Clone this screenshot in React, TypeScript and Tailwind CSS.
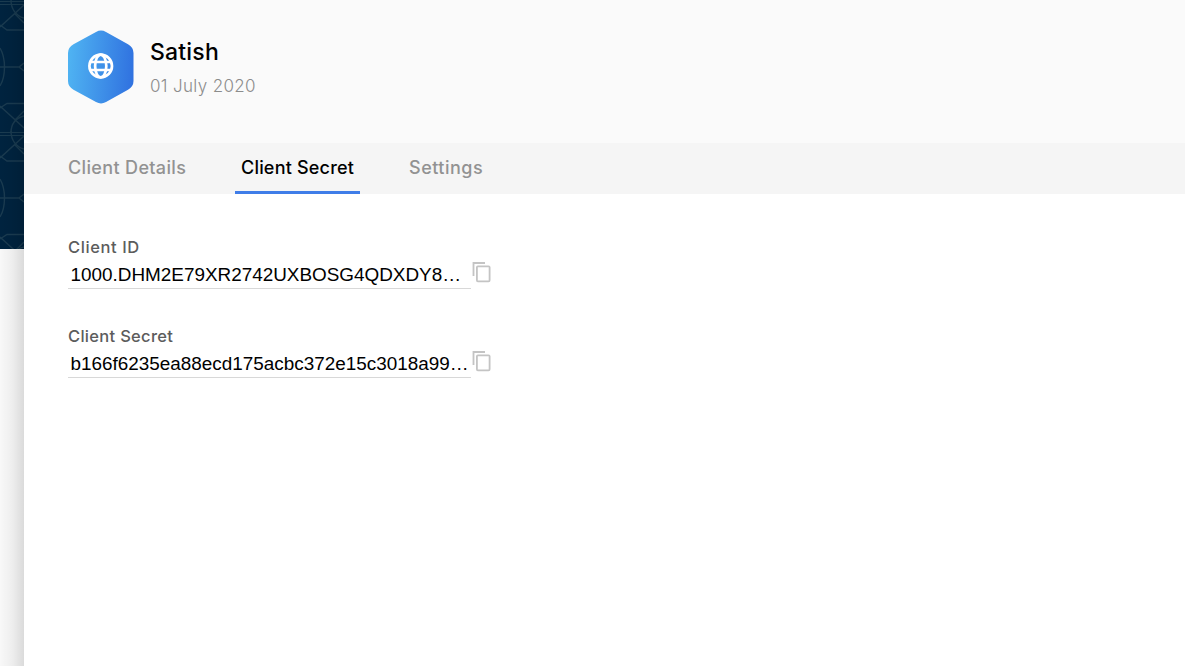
import React from "react";

function Backdrop() {
  return (
    <div className="relative flex w-6 shrink-0 flex-col overflow-hidden bg-[#f8f8f8]">
      <svg width="24" height="249" viewBox="0 0 24 249" className="shrink-0 bg-[#00233f]" fill="none" stroke="#1a3b50" strokeWidth="1.4">
        <g id="tile">
          <path d="M0 1.5H24M0 4.5H24" strokeWidth="1" />
          <path d="M0 27L24 5M0 25L7 30H24M15 14L24 23" />
          <path d="M11 0C11 9 16 16 24 18" />
          <path d="M0 48C6 58 6 76 0 86M0 67H19M24 63L19 67L24 71" />
          <path d="M0 108L7 103.500H24M0 106L24 128M15 120L24 111" />
          <path d="M11 133C11 124 16 118 24 116" />
        </g>
        <use href="#tile" y="131" />
      </svg>
      <div className="absolute inset-0 bg-linear-to-r from-transparent via-black/[0.04] to-black/[0.12]" />
    </div>
  );
}

function HexLogo() {
  return (
    <svg width="66" height="74" viewBox="0 0 66 74" className="shrink-0">
      <defs>
        <linearGradient id="hex" x1="0" y1="0.46" x2="1" y2="0.54">
          <stop offset="0" stopColor="#4fb3f2" />
          <stop offset="1" stopColor="#3072e0" />
        </linearGradient>
      </defs>
      <path d="M28 2Q33 -.8 38 2L60 14.200Q65.500 17.300 65.500 23V51Q65.500 56.500 60 59.700L38 72Q33 74.800 28 72L5.500 59.700Q0 56.500 0 51V23Q0 17.300 5.500 14.200Z" fill="url(#hex)" />
      <g fill="none" stroke="#fff" strokeWidth="2.7">
        <circle cx="32.700" cy="36" r="11.300" />
        <ellipse cx="32.700" cy="36" rx="5.600" ry="11.300" />
        <path d="M22 32H43.500M22 40H43.500" />
      </g>
    </svg>
  );
}

function CopyIcon() {
  return (
    <svg width="20" height="22" viewBox="0 0 20 22" fill="none" stroke="#c4c4c4" strokeWidth="1.8" className="shrink-0">
      <path d="M2.5 15V2H14" />
      <rect x="5.9" y="5.3" width="12.700" height="15" rx="1" />
    </svg>
  );
}

function Field({ label, value, labelClass }: { label: string; value: string; labelClass: string }) {
  return (
    <div className="h-[89px]">
      <div className={`h-[22px] text-[16.5px] leading-[22px] font-medium text-[#5c5c5c] ${labelClass}`}>{label}</div>
      <div className="flex">
        <div className="mt-1 h-[27px] w-[403px] border-b border-[#d8d8d8] pl-[2.5px] font-['Liberation_Sans',sans-serif] text-[18.9px] leading-[26px] whitespace-nowrap text-black">{value}</div>
        <button className="mt-[3px] h-[22px]" aria-label="Copy"><CopyIcon /></button>
      </div>
    </div>
  );
}

export default function App() {
  return (
    <div className="flex h-screen overflow-hidden bg-white font-['Inter',sans-serif]">
      <Backdrop />
      <main className="flex-1 bg-white">
        <header className="flex h-[143px] rounded-bl-[8px] bg-[#fafafa] pt-[30px] pl-11">
          <HexLogo />
          <div className="ml-4">
            <h1 className="mt-1.5 text-[23px] leading-8 font-medium tracking-[0.2px] text-black">Satish</h1>
            <p className="mt-1.5 text-[17px] leading-6 font-light tracking-[0.35px] text-[#8c8c8c]">01 July 2020</p>
          </div>
        </header>
        <nav className="flex h-[51px] bg-[#f5f5f5] pl-11 text-[18px] font-medium text-[#929292]">
          <div className="w-[167px] pt-[11px] leading-7 tracking-[0.35px]">Client Details</div>
          <div className="w-[125px] border-b-[3px] border-[#3f7de8] pt-[11px] pl-1.5 leading-7 tracking-[0.2px] text-black">Client Secret</div>
          <div className="ml-[49px] pt-[11px] leading-7 tracking-[0.5px]">Settings</div>
        </nav>
        <section className="pt-[42px] pl-11">
          <Field label="Client ID" value="1000.DHM2E79XR2742UXBOSG4QDXDY8…" labelClass="tracking-[0.6px]" />
          <Field label="Client Secret" value="b166f6235ea88ecd175acbc372e15c3018a99…" labelClass="tracking-[0.3px]" />
        </section>
      </main>
    </div>
  );
}
